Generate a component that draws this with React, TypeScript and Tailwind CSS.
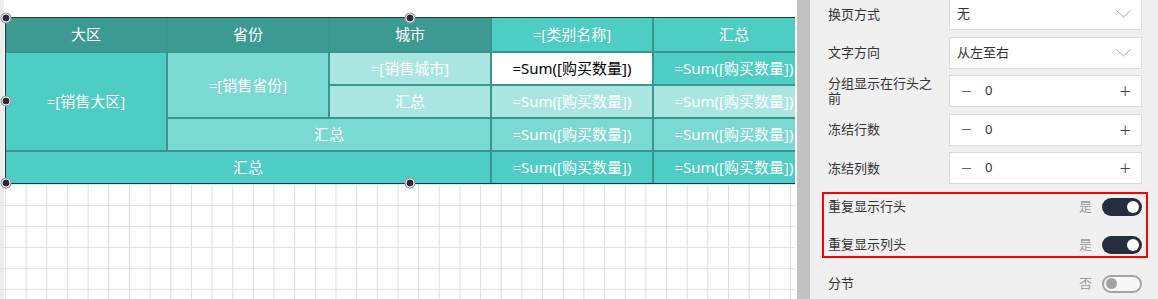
import { ReactNode } from 'react'

const teal = 'bg-[#4ecdc4]'
const mid = 'bg-[#7bd9d3]'
const light = 'bg-[#a9e6e2]'
const sum = '=Sum([购买数量])'

function Cell({ className, children }: { className: string; children: ReactNode }) {
  return (
    <div className={`flex items-center justify-center text-[15px] text-white whitespace-nowrap ${className}`}>
      {children}
    </div>
  )
}

function Handle({ pos }: { pos: string }) {
  return (
    <div
      className={`absolute ${pos} w-[9px] h-[9px] -translate-x-1/2 -translate-y-1/2 rounded-full bg-[#262b40] border-[1.5px] border-white shadow-[0_0_0_1px_#9a9a9a]`}
    />
  )
}

function Chevron() {
  return (
    <svg width="15" height="8" viewBox="0 0 15 8" fill="none">
      <path d="M0.5 0.5 L7.5 7 L14.5 0.5" stroke="#a8a8a8" strokeWidth="1" />
    </svg>
  )
}

function Row({ label, children }: { label: string; children: ReactNode }) {
  return (
    <div className="flex items-center h-[32px]">
      <div className="w-[121px] shrink-0 pr-[10px] text-[13px] leading-[15px] text-[#333]">{label}</div>
      {children}
    </div>
  )
}

function Select({ value }: { value: string }) {
  return (
    <div className="flex-1 h-full bg-white border border-[#dcdcdc] flex items-center justify-between pl-[7px] pr-[10px]">
      <span className="text-[13px] text-[#333]">{value}</span>
      <Chevron />
    </div>
  )
}

function Stepper() {
  return (
    <div className="flex-1 h-full bg-white border border-[#dcdcdc] flex items-center pl-[12px] pr-[10px]">
      <span className="w-[9px] h-px bg-[#666]" />
      <span className="ml-[14px] text-[13px] text-[#333]">0</span>
      <span className="ml-auto text-[20px] leading-none font-light text-[#444]">+</span>
    </div>
  )
}

function ToggleRow({ label, on }: { label: string; on: boolean }) {
  return (
    <div className="flex items-center h-[32px]">
      <div className="flex-1 text-[13px] text-[#333]">{label}</div>
      <span className="mr-[10px] text-[13px] text-[#999]">{on ? '是' : '否'}</span>
      {on ? (
        <div className="w-[40px] h-[18px] rounded-full bg-[#262d40] flex items-center justify-end pr-[3px]">
          <div className="w-[12px] h-[12px] rounded-full bg-white" />
        </div>
      ) : (
        <div className="w-[40px] h-[18px] rounded-full bg-[#f7f7f7] border-2 border-[#a3a3a3] flex items-center pl-[2px]">
          <div className="w-[11px] h-[11px] rounded-full bg-[#a3a3a3]" />
        </div>
      )}
    </div>
  )
}

export default function App() {
  return (
    <div className="flex h-[299px] w-full overflow-hidden font-['Noto_Sans','Noto_Sans_CJK_SC',sans-serif]">
      {/* 设计画布 */}
      <div className="w-[795px] shrink-0 flex overflow-hidden bg-white">
        <div className="w-[4px] shrink-0 bg-[#ededed]" />
        <div className="flex-1 flex flex-col min-w-0">
          <div className="h-[17px] shrink-0" />
          <div className="relative ml-[1px] w-[810px] shrink-0 border border-[#1d3442]">
            <div className="grid grid-cols-[repeat(5,160px)] grid-rows-[33px_31px_31px_31px_31px] gap-[2px] bg-[#3a958e]">
              <Cell className="bg-[#3c9a93]">大区</Cell>
              <Cell className="bg-[#3c9a93]">省份</Cell>
              <Cell className="bg-[#3c9a93]">城市</Cell>
              <Cell className={teal}>=[类别名称]</Cell>
              <Cell className={teal}>汇总</Cell>

              <Cell className={`${teal} col-start-1 row-start-2 row-span-3`}>=[销售大区]</Cell>
              <Cell className={`${mid} col-start-2 row-start-2 row-span-2`}>=[销售省份]</Cell>
              <Cell className={`${light} col-start-3 row-start-2`}>=[销售城市]</Cell>
              <Cell className="col-start-4 row-start-2 bg-white !text-black">{sum}</Cell>
              <Cell className={`${teal} col-start-5 row-start-2`}>{sum}</Cell>

              <Cell className={`${light} col-start-3 row-start-3`}>汇总</Cell>
              <Cell className={`${light} col-start-4 row-start-3`}>{sum}</Cell>
              <Cell className={`${light} col-start-5 row-start-3`}>{sum}</Cell>

              <Cell className={`${mid} col-start-2 col-span-2 row-start-4`}>汇总</Cell>
              <Cell className={`${mid} col-start-4 row-start-4`}>{sum}</Cell>
              <Cell className={`${mid} col-start-5 row-start-4`}>{sum}</Cell>

              <Cell className={`${teal} col-start-1 col-span-3 row-start-5`}>汇总</Cell>
              <Cell className={`${teal} col-start-4 row-start-5`}>{sum}</Cell>
              <Cell className={`${teal} col-start-5 row-start-5`}>{sum}</Cell>
            </div>
            <Handle pos="left-0 top-0" />
            <Handle pos="left-1/2 top-0" />
            <Handle pos="left-0 top-1/2" />
            <Handle pos="left-0 top-full" />
            <Handle pos="left-1/2 top-full" />
          </div>
          <div className="flex-1 -ml-[4px] bg-[linear-gradient(to_right,#dddddd_1px,transparent_1px),linear-gradient(to_bottom,#e3e3e3_1px,transparent_1px)] bg-[size:20.67px_21px] bg-[position:5px_0px]" />
        </div>
      </div>
      <div className="w-[2px] shrink-0 bg-white" />
      <div className="w-[13px] shrink-0 bg-[#c2c2c2]" />

      {/* 属性面板 */}
      <div className="relative flex-1 bg-[#f0f0f0] pl-[18px] pr-[16px]">
        <div className="-mt-[2px] flex flex-col gap-[6.5px]">
          <Row label="换页方式"><Select value="无" /></Row>
          <Row label="文字方向"><Select value="从左至右" /></Row>
          <Row label="分组显示在行头之前"><Stepper /></Row>
          <Row label="冻结行数"><Stepper /></Row>
          <Row label="冻结列数"><Stepper /></Row>
          <ToggleRow label="重复显示行头" on />
          <ToggleRow label="重复显示列头" on />
          <ToggleRow label="分节" on={false} />
        </div>
        <div className="absolute left-[12px] top-[192px] w-[326px] h-[66px] border-2 border-[#ff0000]" />
      </div>
    </div>
  )
}
